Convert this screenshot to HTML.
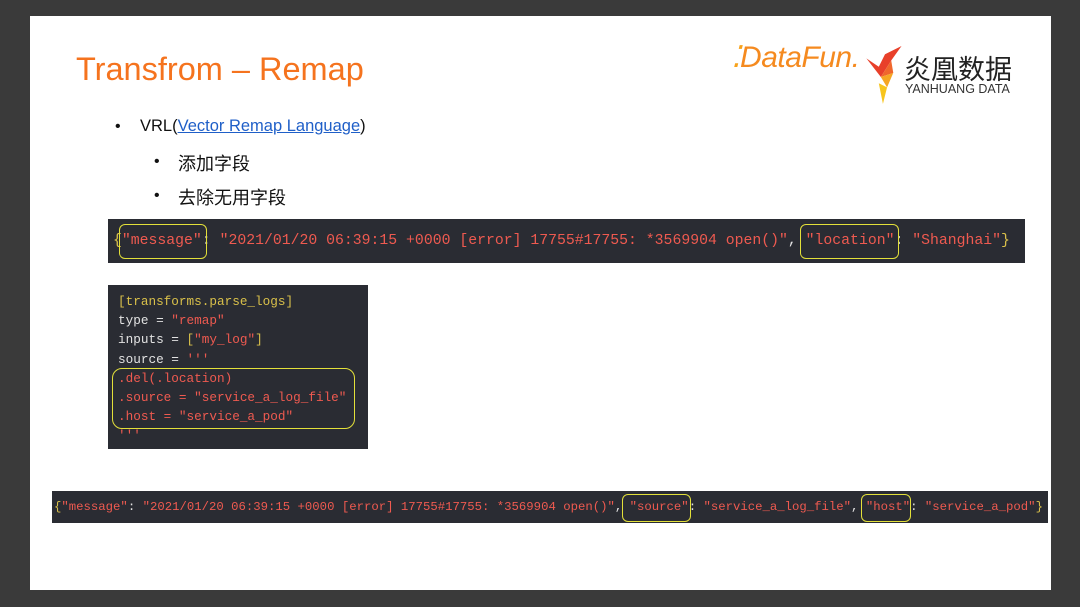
<!DOCTYPE html>
<html><head><meta charset="utf-8"><style>
body{margin:0;width:1080px;height:607px;background:#3a3a3a;position:relative;overflow:hidden;font-family:"Liberation Sans","Noto Sans CJK SC",sans-serif}
.slide{position:absolute;left:30px;top:16px;width:1021px;height:574px;background:#fff}
.a{position:absolute;white-space:pre}
.mono{font-family:"Liberation Mono","DejaVu Sans Mono",monospace}
.r{color:#ef5a50}.y{color:#d9c04a}.w{color:#e2e2e2}
.box{position:absolute;border:1.5px solid #e3e03a;border-radius:6px}
</style></head><body>
<div class="slide"></div>
<div class="a" style="left:76px;top:51px;font-size:32.5px;color:#f5731e">Transfrom – Remap</div>
<div class="a" style="left:115px;top:118px;font-size:16px;color:#111">•</div>
<div class="a" style="left:140px;top:117px;font-size:16.5px;color:#111">VRL(<span style="color:#1f5fc8;text-decoration:underline">Vector Remap Language</span>)</div>
<div class="a" style="left:154px;top:153px;font-size:16px;color:#111">•</div>
<div class="a" style="left:178px;top:150px;font-size:18px;color:#111">添加字段</div>
<div class="a" style="left:154px;top:187px;font-size:16px;color:#111">•</div>
<div class="a" style="left:178px;top:184px;font-size:18px;color:#111">去除无用字段</div>

<!-- logo -->
<div class="a" style="left:731px;top:40px;font-size:30px;font-style:italic;color:#f7a21b;letter-spacing:-0.5px">⁚<span style="color:#f58a1f">DataFun.</span></div>
<svg class="a" style="left:864px;top:46px" width="42" height="60" viewBox="0 0 40 58">
<polygon points="2,12 14,20 20,8 36,0 26,14 16,30" fill="#e8402a"/>
<polygon points="16,30 26,14 28,26" fill="#f0672c"/>
<polygon points="16,30 28,26 22,40" fill="#f6a623"/>
<polygon points="22,40 18,56 14,36" fill="#f7c51e"/>
</svg>
<div class="a" style="left:904px;top:48px;font-size:27px;color:#222">炎凰数据</div>
<div class="a" style="left:905px;top:82px;font-size:12.5px;color:#333">YANHUANG DATA</div>

<!-- bar 1 -->
<div class="a" style="left:108px;top:219px;width:917px;height:44px;background:#2a2c33"></div>
<div class="a mono r" style="left:113px;top:232px;font-size:14.8px;line-height:18px"><span class="y">{</span>"message"<span class="w">:</span> "2021/01/20 06:39:15 +0000 [error] 17755#17755: *3569904 open()"<span class="w">,</span> "location"<span class="w">:</span> "Shanghai"<span class="y">}</span></div>
<div class="box" style="left:119px;top:224px;width:86px;height:33px"></div>
<div class="box" style="left:800px;top:224px;width:97px;height:33px"></div>

<!-- code box -->
<div class="a" style="left:108px;top:285px;width:260px;height:164px;background:#2a2c33"></div>
<div class="a mono w" style="left:118px;top:292px;font-size:12.7px;line-height:19.2px"><span class="y">[transforms.parse_logs]</span>
type = <span class="r">"remap"</span>
inputs = <span class="y">[</span><span class="r">"my_log"</span><span class="y">]</span>
source = <span class="r">'''</span>
<span class="r">.del(.location)</span>
<span class="r">.source = "service_a_log_file"</span>
<span class="r">.host = "service_a_pod"</span>
<span class="r">'''</span></div>
<div class="box" style="left:112px;top:368px;width:241px;height:59px;border-radius:10px"></div>

<!-- bar 2 -->
<div class="a" style="left:52px;top:491px;width:996px;height:32px;background:#2a2c33"></div>
<div class="a mono r" style="left:54px;top:499px;font-size:12.3px;line-height:16px"><span class="y">{</span>"message"<span class="w">:</span> "2021/01/20 06:39:15 +0000 [error] 17755#17755: *3569904 open()"<span class="w">,</span> "source"<span class="w">:</span> "service_a_log_file"<span class="w">,</span> "host"<span class="w">:</span> "service_a_pod"<span class="y">}</span></div>
<div class="box" style="left:622px;top:494px;width:67px;height:26px"></div>
<div class="box" style="left:861px;top:494px;width:48px;height:26px"></div>
</body></html>
